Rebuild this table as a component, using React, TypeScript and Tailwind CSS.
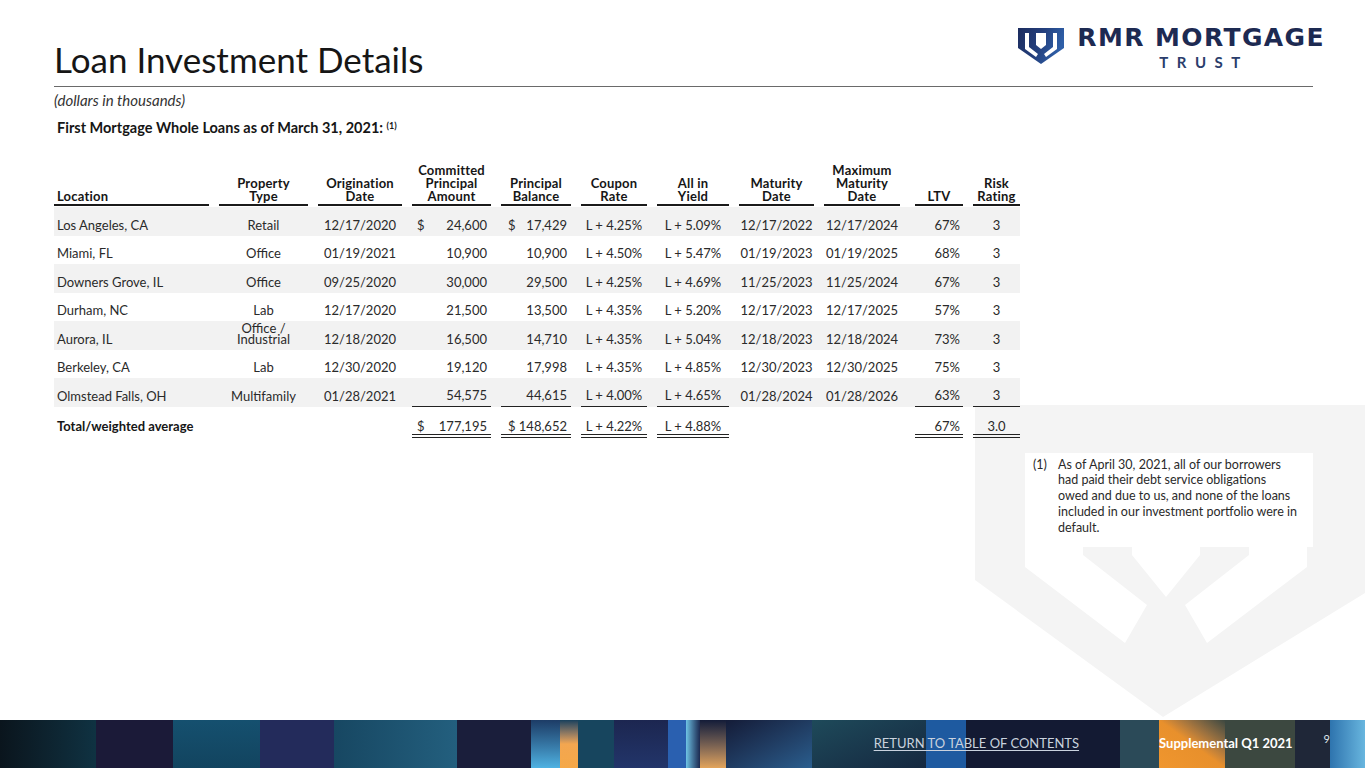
import React from 'react';

type Val = string | [string, string];

const grid =
  'grid grid-cols-[160px_99px_94px_89px_80px_76px_82px_85px_91px_58px_52px]';

// padding on each cell so the underlines break between columns
const pad = [
  'pl-0 pr-[5px]',
  'px-[5px]',
  'px-[5px]',
  'px-[5px]',
  'px-[5px]',
  'px-[5px]',
  'px-[5px]',
  'px-[5px]',
  'pl-[5px] pr-[10px]',
  'px-[5px]',
  'pl-[5px] pr-0',
];

const headers: string[][] = [
  ['Location'],
  ['Property', 'Type'],
  ['Origination', 'Date'],
  ['Committed', 'Principal', 'Amount'],
  ['Principal', 'Balance'],
  ['Coupon', 'Rate'],
  ['All in', 'Yield'],
  ['Maturity', 'Date'],
  ['Maximum', 'Maturity', 'Date'],
  ['LTV'],
  ['Risk', 'Rating'],
];

const rows: Val[][] = [
  ['Los Angeles, CA', 'Retail', '12/17/2020', ['$', '24,600'], ['$', '17,429'], 'L + 4.25%', 'L + 5.09%', '12/17/2022', '12/17/2024', '67%', '3'],
  ['Miami, FL', 'Office', '01/19/2021', '10,900', '10,900', 'L + 4.50%', 'L + 5.47%', '01/19/2023', '01/19/2025', '68%', '3'],
  ['Downers Grove, IL', 'Office', '09/25/2020', '30,000', '29,500', 'L + 4.25%', 'L + 4.69%', '11/25/2023', '11/25/2024', '67%', '3'],
  ['Durham, NC', 'Lab', '12/17/2020', '21,500', '13,500', 'L + 4.35%', 'L + 5.20%', '12/17/2023', '12/17/2025', '57%', '3'],
  ['Aurora, IL', 'Office /\nIndustrial', '12/18/2020', '16,500', '14,710', 'L + 4.35%', 'L + 5.04%', '12/18/2023', '12/18/2024', '73%', '3'],
  ['Berkeley, CA', 'Lab', '12/30/2020', '19,120', '17,998', 'L + 4.35%', 'L + 4.85%', '12/30/2023', '12/30/2025', '75%', '3'],
  ['Olmstead Falls, OH', 'Multifamily', '01/28/2021', '54,575', '44,615', 'L + 4.00%', 'L + 4.65%', '01/28/2024', '01/28/2026', '63%', '3'],
];

const totals: Val[] = ['Total/weighted average', '', '', ['$', '177,195'], ['$', '148,652'], 'L + 4.22%', 'L + 4.88%', '', '', '67%', '3.0'];

// columns that get the rule under the last row and the double rule under the total
const ruled = [3, 4, 5, 6, 9, 10];

const Content: React.FC<{ i: number; value: Val; bold?: boolean }> = ({ i, value, bold }) => {
  if (i === 3 || i === 4) {
    const [sign, num] = Array.isArray(value) ? value : ['', value];
    return (
      <div className={`flex w-full justify-between pr-[4px] ${i === 3 ? 'pl-[5px]' : 'pl-[7px]'}`}>
        <span>{sign}</span>
        <span>{num}</span>
      </div>
    );
  }
  const text = value as string;
  if (i === 0)
    return (
      <div className={`w-full whitespace-nowrap pl-[3px] text-left ${bold ? 'font-bold text-[#161616]' : ''}`}>
        {text}
      </div>
    );
  if (i === 9) return <div className="w-full pr-[3px] text-right">{text}</div>;
  if (text.includes('\n'))
    return <div className="mb-[1px] w-full whitespace-pre-line text-center leading-[11.5px]">{text}</div>;
  return <div className="w-full whitespace-nowrap text-center">{text}</div>;
};

const RowCells: React.FC<{ cells: Val[]; line?: 'single' | 'double'; bold?: boolean }> = ({ cells, line, bold }) => (
  <>
    {cells.map((v, i) => {
      const isRuled = line !== undefined && ruled.includes(i);
      const border = isRuled
        ? line === 'single'
          ? 'border-b border-[#222]'
          : 'border-b-4 border-double border-[#222]'
        : '';
      const bottom = line === 'double' ? (isRuled ? 'pb-0' : 'pb-[4px]') : 'pb-[3px]';
      return (
        <div key={i} className={`${pad[i]} h-full`}>
          <div className={`flex h-full items-end ${bottom} ${border}`}>
            {v !== '' && <Content i={i} value={v} bold={bold} />}
          </div>
        </div>
      );
    })}
  </>
);

const Logo: React.FC = () => (
  <div className="flex items-start gap-[13px]">
    <svg width="46" height="36" viewBox="0 0 46 36" className="mt-[3px]">
      <defs>
        <linearGradient id="shield" x1="0" y1="0" x2="1" y2="0.3">
          <stop offset="0" stopColor="#1c2c5e" />
          <stop offset="0.55" stopColor="#24407e" />
          <stop offset="1" stopColor="#2e5fa8" />
        </linearGradient>
      </defs>
      <path d="M0 0 H46 V20 L23 36 L0 20 Z" fill="url(#shield)" />
      <path d="M7 5 H11 V19 L20 26 L18 29 L7 21 Z" fill="#fff" />
      <path d="M18 5 H28 V17 L23 21 L18 17 Z" fill="#fff" />
      <path d="M35 5 H39 V21 L28 29 L26 26 L35 19 Z" fill="#fff" />
    </svg>
    <div className="flex flex-col">
      <div className="font-['DejaVu_Sans',sans-serif] text-[25px] font-bold leading-none tracking-[1.4px] text-[#1d2a52]">
        RMR MORTGAGE
      </div>
      <div className="mt-[5px] pl-[82px] font-[Lato,sans-serif] text-[15px] font-bold leading-none tracking-[8.5px] text-[#2a3d6c]">
        TRUST
      </div>
    </div>
  </div>
);

const Watermark: React.FC = () => (
  <svg
    width="390"
    height="315"
    viewBox="0 0 390 315"
    className="pointer-events-none absolute left-[975px] top-[405px]"
  >
    <path
      fillRule="evenodd"
      fill="#f4f4f4"
      d="M0 0 H390 V188 L188 312 L0 175 Z
         M50 48 H108 V150 L172 200 L150 238 L50 162 Z
         M157 48 H225 V150 L191 192 L157 150 Z
         M274 48 H332 V162 L232 238 L210 200 L274 150 Z"
    />
  </svg>
);

const strips: string[] = [
  'w-[96px] bg-linear-to-r from-[#0a151d] to-[#0f3242]',
  'w-[77px] bg-[#1b1a38]',
  'w-[87px] bg-linear-to-b from-[#15506f] to-[#12445f]',
  'w-[74px] bg-[#232b5b]',
  'w-[123px] bg-linear-to-r from-[#174762] to-[#235f7e]',
  'w-[74px] bg-[#1a1e3b]',
  'w-[29px] bg-linear-to-b from-[#1d3c66] to-[#4fb2e2]',
  'w-[18px] bg-linear-to-b from-[#17405c] via-[#f3a650] to-[#f5a848]',
  'w-[36px] bg-[#17455e]',
  'w-[54px] bg-linear-to-b from-[#1c2650] to-[#22356a]',
  'w-[18px] bg-[#2a60b0]',
  'w-[14px] bg-linear-to-r from-[#6fc4e6] to-[#1c2a50]',
  'w-[26px] bg-linear-to-b from-[#141c38] to-[#e3a45a]',
  'w-[86px] bg-linear-to-br from-[#141c38] to-[#2a5e8e]',
  'w-[114px] bg-linear-to-br from-[#1e4a5a] to-[#152840]',
  'w-[40px] bg-[#1e5aa0]',
  'w-[154px] bg-[#131a33]',
  'w-[39px] bg-[#2b4a58]',
  'w-[66px] bg-linear-to-tr from-[#f0962e] via-[#e8902c] to-[#3c4840]',
  'w-[70px] bg-[#3c4840]',
  'w-[35px] bg-[#1f2738]',
  'w-[36px] bg-linear-to-r from-[#2e74ae] to-[#6ab8e0]',
];

const App: React.FC = () => {
  return (
    <div className="relative flex h-[768px] w-[1365px] flex-col overflow-hidden bg-white font-[Lato,sans-serif] text-[#2a2a2a]">
      <Watermark />

      <div className="relative flex-1 pl-[54px] pr-[52px]">
        <header className="flex items-start justify-between border-b border-[#6a6a6a] pb-[7px] pt-[25px]">
          <h1 className="mt-[14px] text-[35px] font-normal leading-[40px] text-[#161616]">
            Loan Investment Details
          </h1>
          <div className="mr-[-12px]">
            <Logo />
          </div>
        </header>

        <p className="mt-[5px] text-[15px] italic leading-[17px] text-[#333]">(dollars in thousands)</p>
        <h2 className="mt-[10px] pl-[3px] text-[14.5px] font-bold leading-[17px] text-[#161616]">
          First Mortgage Whole Loans as of March 31, 2021: <sup className="text-[9px]">(1)</sup>
        </h2>

        <div className="mt-[27px] w-[966px] text-[13px] leading-[15px]">
          <div className={`${grid} h-[43px]`}>
            {headers.map((h, i) => (
              <div key={i} className={`${pad[i]} h-full`}>
                <div
                  className={`flex h-full flex-col justify-end border-b-2 border-[#1a1a1a] pb-[1px] text-[13px] font-bold leading-[13px] tracking-[0.2px] text-[#161616] ${
                    i === 0 ? 'items-start pl-[3px]' : 'items-center'
                  }`}
                >
                  {h.map((l) => (
                    <span key={l} className="whitespace-nowrap">
                      {l}
                    </span>
                  ))}
                </div>
              </div>
            ))}
          </div>
          <div className="h-[1px]" />
          {rows.map((r, ri) => (
            <div key={ri} className={`${grid} h-[28.5px] ${ri % 2 === 0 ? 'bg-[#f2f2f2]' : ''}`}>
              <RowCells cells={r} line={ri === rows.length - 1 ? 'single' : undefined} />
            </div>
          ))}
          <div className={`${grid} h-[31px]`}>
            <RowCells cells={totals} line="double" bold />
          </div>
        </div>

        <div className="mt-[15px] flex justify-end">
          <div className="flex w-[288px] bg-white pb-[12px] pl-[8px] pt-[4px] text-[12.5px] leading-[15.8px] text-[#2a2a2a]">
            <span className="w-[25px] shrink-0">(1)</span>
            <span>
              As of April 30, 2021, all of our borrowers
              <br />
              had paid their debt service obligations
              <br />
              owed and due to us, and none of the loans
              <br />
              included in our investment portfolio were in
              <br />
              default.
            </span>
          </div>
        </div>
      </div>

      <footer className="relative h-[48px] shrink-0">
        <div className="absolute inset-0 flex">
          {strips.map((s, i) => (
            <div key={i} className={`h-full shrink-0 ${s}`} />
          ))}
        </div>
        <div className="relative flex h-full items-center justify-end pr-[35px]">
          <a className="text-[13px] uppercase text-[#c9d2de] underline underline-offset-2">
            Return to Table of Contents
          </a>
          <span className="ml-[80px] text-[13px] font-bold text-white">Supplemental Q1 2021</span>
          <span className="mb-[10px] ml-[31px] text-[11px] text-[#dde3ea]">9</span>
        </div>
      </footer>
    </div>
  );
};

export default App;
